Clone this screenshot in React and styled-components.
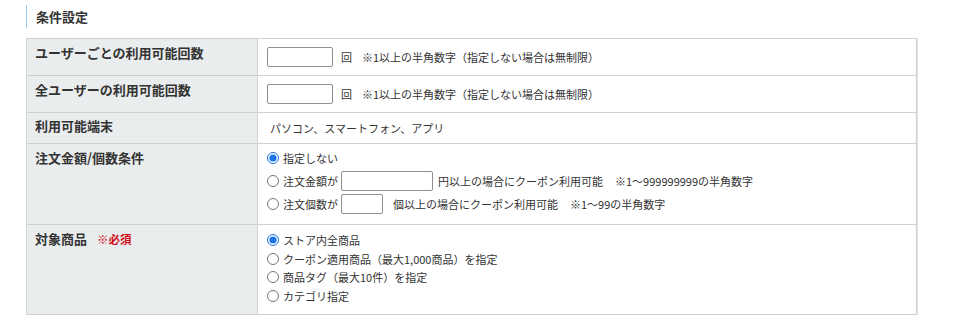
import React from "react";
import styled, { createGlobalStyle } from "styled-components";

const Global = createGlobalStyle`
  html, body { margin: 0; padding: 0; background: #fff; }
  body {
    font-family: "Noto Sans CJK JP", "Noto Sans", "Liberation Sans", sans-serif;
    color: #333;
  }
`;

const Page = styled.div`
  padding: 5px 0 0 26px;
  width: 891px;
`;

const Heading = styled.h2`
  margin: 0 0 10px 0;
  height: 23px;
  display: flex;
  align-items: center;
  padding-left: 9px;
  border-left: 1px solid #9ccbf0;
  font-size: 13px;
  font-weight: bold;
  color: #333;
`;

const Table = styled.table`
  width: 891px;
  border-collapse: collapse;
  table-layout: fixed;
  border: 1px solid #cdd2d3;
  box-shadow: 1px 1px 0 #dde1e1;
`;

const Th = styled.th`
  width: 214px;
  background: #eaedee;
  border: 1px solid #cdd2d3;
  text-align: left;
  vertical-align: top;
  padding: ${(p) => p.$pt ?? 5}px 8px 0 8px;
  font-size: 13px;
  line-height: 18px;
  font-weight: bold;
  color: #333;
`;

const Required = styled.span`
  color: #d0101a;
  font-size: 11.5px;
  margin-left: 10px;
`;

const Td = styled.td`
  border: 1px solid #cdd2d3;
  vertical-align: ${(p) => (p.$top ? "top" : "middle")};
  padding: ${(p) => p.$pad || "8px 9px"};
  font-size: 11px;
  line-height: 18px;
  color: #333;
  box-sizing: border-box;
`;

const Line = styled.div`
  display: flex;
  align-items: center;
  height: ${(p) => p.$h || 18}px;
  margin-top: ${(p) => p.$mt || 0}px;
  white-space: nowrap;
`;

const TextInput = styled.input`
  box-sizing: border-box;
  width: ${(p) => p.$w}px;
  height: 20px;
  margin: 0;
  padding: 0 4px;
  border: 1px solid #8f8f8f;
  border-radius: 2px;
  background: #fff;
  font-size: 11px;
`;

const Unit = styled.span`
  margin-left: ${(p) => p.$ml ?? 8}px;
`;

const Note = styled.span`
  margin-left: ${(p) => p.$ml ?? 10}px;
`;

const Plain = styled.span`
  padding-left: 3px;
`;

const Radio = styled.input.attrs({ type: "radio" })`
  width: 12px;
  height: 12px;
  margin: 0 4px 0 0;
  accent-color: #1a73e8;
  flex: none;
`;

const RadioLabel = styled.label`
  display: inline-flex;
  align-items: center;
`;

export default function App() {
  return (
    <>
      <Global />
      <Page>
        <Heading>条件設定</Heading>
        <Table>
          <tbody>
            <tr>
              <Th>ユーザーごとの利用可能回数</Th>
              <Td>
                <Line $h={20}>
                  <TextInput $w={66} />
                  <Unit>回</Unit>
                  <Note>※1以上の半角数字（指定しない場合は無制限）</Note>
                </Line>
              </Td>
            </tr>
            <tr>
              <Th>全ユーザーの利用可能回数</Th>
              <Td>
                <Line $h={20}>
                  <TextInput $w={66} />
                  <Unit>回</Unit>
                  <Note>※1以上の半角数字（指定しない場合は無制限）</Note>
                </Line>
              </Td>
            </tr>
            <tr>
              <Th $pt={4}>利用可能端末</Th>
              <Td $pad="6px 9px">
                <Line>
                  <Plain>パソコン、スマートフォン、アプリ</Plain>
                </Line>
              </Td>
            </tr>
            <tr>
              <Th>注文金額/個数条件</Th>
              <Td $top $pad="5px 9px 9px">
                <Line>
                  <RadioLabel>
                    <Radio name="cond" defaultChecked />
                    指定しない
                  </RadioLabel>
                </Line>
                <Line $h={22} $mt={3}>
                  <RadioLabel>
                    <Radio name="cond" />
                    注文金額が
                  </RadioLabel>
                  <Unit $ml={3}>
                    <TextInput $w={92} />
                  </Unit>
                  <Unit $ml={5}>円以上の場合にクーポン利用可能</Unit>
                  <Note $ml={12}>※1～999999999の半角数字</Note>
                </Line>
                <Line $h={22} $mt={1}>
                  <RadioLabel>
                    <Radio name="cond" />
                    注文個数が
                  </RadioLabel>
                  <Unit $ml={3}>
                    <TextInput $w={42} />
                  </Unit>
                  <Unit $ml={10}>個以上の場合にクーポン利用可能</Unit>
                  <Note $ml={12}>※1～99の半角数字</Note>
                </Line>
              </Td>
            </tr>
            <tr>
              <Th>
                対象商品<Required>※必須</Required>
              </Th>
              <Td $top $pad="6px 9px 9px">
                <Line $h={18.5}>
                  <RadioLabel>
                    <Radio name="target" defaultChecked />
                    ストア内全商品
                  </RadioLabel>
                </Line>
                <Line $h={18.5}>
                  <RadioLabel>
                    <Radio name="target" />
                    クーポン適用商品（最大1,000商品）を指定
                  </RadioLabel>
                </Line>
                <Line $h={18.5}>
                  <RadioLabel>
                    <Radio name="target" />
                    商品タグ（最大10件）を指定
                  </RadioLabel>
                </Line>
                <Line $h={18.5}>
                  <RadioLabel>
                    <Radio name="target" />
                    カテゴリ指定
                  </RadioLabel>
                </Line>
              </Td>
            </tr>
          </tbody>
        </Table>
      </Page>
    </>
  );
}
